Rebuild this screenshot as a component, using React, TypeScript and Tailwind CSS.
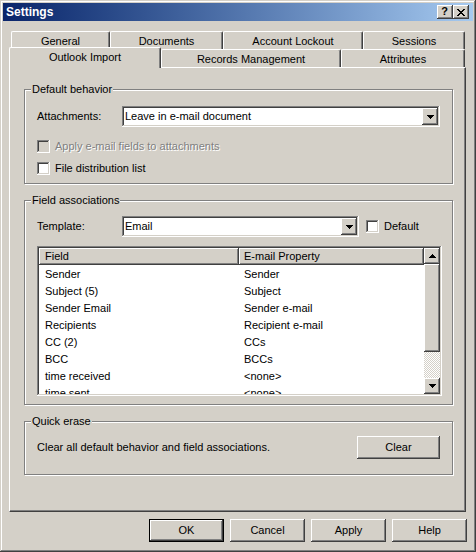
import React from 'react';

const raised =
  'shadow-[inset_-1px_-1px_#404040,inset_1px_1px_#ffffff,inset_-2px_-2px_#808080,inset_2px_2px_#d4d0c8]';
const sunken =
  'shadow-[inset_-1px_-1px_#ffffff,inset_1px_1px_#808080,inset_-2px_-2px_#d4d0c8,inset_2px_2px_#404040]';

function DownArrow() {
  return (
    <svg width="7" height="4" viewBox="0 0 7 4" shapeRendering="crispEdges">
      <path d="M0 0h7v1H0zM1 1h5v1H1zM2 2h3v1H2zM3 3h1v1H3z" fill="#000" />
    </svg>
  );
}

function UpArrow() {
  return (
    <svg width="7" height="4" viewBox="0 0 7 4" shapeRendering="crispEdges">
      <path d="M3 0h1v1H3zM2 1h3v1H2zM1 2h5v1H1zM0 3h7v1H0z" fill="#000" />
    </svg>
  );
}

function CloseGlyph() {
  return (
    <svg width="8" height="7" viewBox="0 0 8 7" shapeRendering="crispEdges">
      <path
        d="M0 0h2v1H0zM6 0h2v1H6zM1 1h2v1H1zM5 1h2v1H5zM2 2h4v1H2zM3 3h2v1H3zM2 4h4v1H2zM1 5h2v1H1zM5 5h2v1H5zM0 6h2v1H0zM6 6h2v1H6z"
        fill="#000"
      />
    </svg>
  );
}

function Combo({ value, width }: { value: string; width: string }) {
  return (
    <div className={`flex h-[21px] bg-white p-[2px] ${width} ${sunken}`}>
      <span className="flex-1 pl-[1px] leading-[17px] text-black">{value}</span>
      <div className={`flex w-[16px] items-center justify-center bg-[#d4d0c8] ${raised}`}>
        <DownArrow />
      </div>
    </div>
  );
}

function Check({ label, disabled }: { label: string; disabled?: boolean }) {
  return (
    <div className="flex h-[13px] items-center gap-[5px] leading-[13px]">
      <span className={`h-[13px] w-[13px] ${disabled ? 'bg-[#d4d0c8]' : 'bg-white'} ${sunken}`} />
      <span
        className={
          disabled ? 'text-[#808080] [text-shadow:1px_1px_0_#ffffff]' : 'text-black'
        }
      >
        {label}
      </span>
    </div>
  );
}

function Group({
  title,
  className,
  children,
}: {
  title: string;
  className: string;
  children: React.ReactNode;
}) {
  return (
    <div
      className={`ml-[14px] w-[429px] border border-[#808080] shadow-[1px_1px_0_#ffffff,inset_1px_1px_0_#ffffff] ${className}`}
    >
      <div className="-mt-[8px] ml-[6px] w-fit bg-[#d4d0c8] px-[1px] leading-[14px]">{title}</div>
      {children}
    </div>
  );
}

function Tab({ label, width, selected }: { label: string; width: string; selected?: boolean }) {
  return (
    <div
      className={`flex items-center justify-center rounded-tl-[2px] rounded-tr-[2px] border-l border-t border-r border-l-white border-t-white border-r-[#404040] bg-[#d4d0c8] shadow-[inset_-1px_0_#808080] ${width} ${
        selected ? 'relative z-10 -mt-[2px] h-[21px] pb-[2px]' : 'h-[18px] pt-[1px]'
      }`}
    >
      {label}
    </div>
  );
}

function Button({ label, isDefault }: { label: string; isDefault?: boolean }) {
  return (
    <div
      className={`flex h-[23px] w-[75px] items-center justify-center bg-[#d4d0c8] ${
        isDefault ? 'border border-black' : ''
      } ${raised}`}
    >
      {label}
    </div>
  );
}

const rows = [
  ['Sender', 'Sender'],
  ['Subject (5)', 'Subject'],
  ['Sender Email', 'Sender e-mail'],
  ['Recipients', 'Recipient e-mail'],
  ['CC (2)', 'CCs'],
  ['BCC', 'BCCs'],
  ['time received', '<none>'],
  ['time sent', '<none>'],
];

export default function App() {
  return (
    <div
      className={`h-[552px] w-[476px] overflow-hidden bg-[#d4d0c8] pt-[3px] font-['Liberation_Sans',Arial,sans-serif] text-[11px] text-black shadow-[inset_-1px_-1px_#404040,inset_1px_1px_#d4d0c8,inset_-2px_-2px_#808080,inset_2px_2px_#ffffff]`}
    >
      {/* title bar */}
      <div className="mx-[3px] flex h-[18px] items-center justify-between bg-linear-to-r from-[#0a246a] to-[#a6caf0] pl-[3px] pr-[4px]">
        <span className="text-[12px] font-bold leading-[18px] text-white">Settings</span>
        <div className="flex">
          <div className={`flex h-[14px] w-[16px] items-center justify-center bg-[#d4d0c8] pb-[1px] pr-[1px] ${raised}`}>
            <span className="text-[11px] font-bold leading-[11px]">?</span>
          </div>
          <div className={`flex h-[14px] w-[16px] items-center justify-center bg-[#d4d0c8] pr-[1px] ${raised}`}>
            <CloseGlyph />
          </div>
        </div>
      </div>

      {/* tabs */}
      <div className="ml-[9px] mt-[10px] w-[457px]">
        <div className="ml-[2px] flex">
          <Tab label="General" width="w-[99px]" />
          <Tab label="Documents" width="w-[113px]" />
          <Tab label="Account Lockout" width="w-[140px]" />
          <Tab label="Sessions" width="w-[102px]" />
        </div>
        <div className="flex h-[18px] items-start">
          <Tab label="Outlook Import" width="w-[152px]" selected />
          <Tab label="Records Management" width="w-[180px]" />
          <Tab label="Attributes" width="w-[124px]" />
        </div>

        {/* panel */}
        <div className="flex h-[445px] flex-col border-l border-t border-r border-b border-l-white border-t-white border-r-[#404040] border-b-[#404040] shadow-[inset_-1px_-1px_#808080]">
          <Group title="Default behavior" className="mt-[21px] h-[95px]">
            <div className="ml-[12px] mt-[10px] flex items-center">
              <span className="w-[85px]">Attachments:</span>
              <Combo value="Leave in e-mail document" width="w-[318px]" />
            </div>
            <div className="ml-[12px] mt-[13px]">
              <Check label="Apply e-mail fields to attachments" disabled />
            </div>
            <div className="ml-[12px] mt-[9px]">
              <Check label="File distribution list" />
            </div>
          </Group>

          <Group title="Field associations" className="mt-[16px] h-[205px]">
            <div className="ml-[12px] mt-[9px] flex items-center">
              <span className="w-[85px]">Template:</span>
              <Combo value="Email" width="w-[237px]" />
              <div className="ml-[7px]">
                <Check label="Default" />
              </div>
            </div>
            <div className={`ml-[12px] mt-[9px] flex h-[150px] w-[405px] bg-white p-[2px] ${sunken}`}>
              <div className="flex w-[385px] flex-col overflow-hidden">
                <div className="flex h-[17px] shrink-0">
                  <div className={`w-[200px] bg-[#d4d0c8] pl-[6px] leading-[17px] ${raised}`}>Field</div>
                  <div className={`w-[185px] bg-[#d4d0c8] pl-[5px] leading-[17px] ${raised}`}>
                    E-mail Property
                  </div>
                </div>
                {rows.map(([field, prop]) => (
                  <div key={field} className="flex h-[17px] shrink-0 pt-[1px] leading-[17px]">
                    <span className="w-[200px] pl-[6px]">{field}</span>
                    <span className="w-[185px] pl-[5px]">{prop}</span>
                  </div>
                ))}
              </div>
              <div className="flex w-[16px] flex-col">
                <div className={`flex h-[16px] items-center justify-center bg-[#d4d0c8] ${raised}`}>
                  <UpArrow />
                </div>
                <div className={`h-[88px] bg-[#d4d0c8] ${raised}`} />
                <div className="h-[26px] bg-[repeating-conic-gradient(#ffffff_0%_25%,#d4d0c8_0%_50%)] bg-[length:2px_2px]" />
                <div className={`flex h-[16px] items-center justify-center bg-[#d4d0c8] ${raised}`}>
                  <DownArrow />
                </div>
              </div>
            </div>
          </Group>

          <Group title="Quick erase" className="mt-[16px] h-[54px]">
            <div className="ml-[12px] mr-[12px] mt-[8px] flex items-center justify-between">
              <span>Clear all default behavior and field associations.</span>
              <div className={`flex h-[23px] w-[83px] items-center justify-center ${raised}`}>Clear</div>
            </div>
          </Group>
        </div>
      </div>

      {/* dialog buttons */}
      <div className="ml-[149px] mt-[7px] flex gap-[6px]">
        <Button label="OK" isDefault />
        <Button label="Cancel" />
        <Button label="Apply" />
        <Button label="Help" />
      </div>
    </div>
  );
}
